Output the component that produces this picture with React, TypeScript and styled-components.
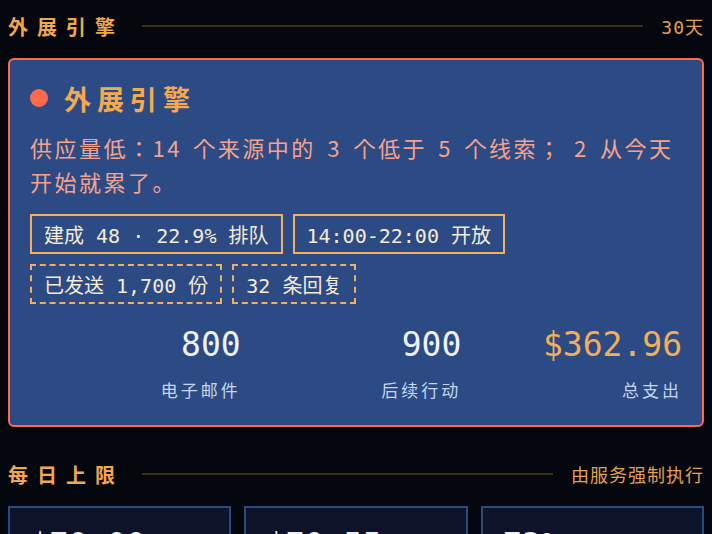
import React from "react";
import styled, { createGlobalStyle } from "styled-components";

const GlobalStyle = createGlobalStyle`
  html, body {
    margin: 0;
    padding: 0;
    background: #05070f;
  }
  body {
    font-family: "Noto Sans CJK JP", "Noto Sans", sans-serif;
    color: #eef2ff;
  }
`;

const CJK = `"Noto Sans CJK JP", "Noto Sans", sans-serif`;
const MONO = `"DejaVu Sans Mono", "Noto Sans CJK JP", monospace`;

const Page = styled.div`
  padding: 8px 8px 0;
  display: flex;
  flex-direction: column;
`;

const SectionHead = styled.div`
  height: 36px;
  display: flex;
  align-items: center;
  gap: 18px;
`;

const SectionTitle = styled.h2`
  margin: 0;
  font-family: ${CJK};
  font-size: 20px;
  font-weight: 700;
  letter-spacing: 9px;
  color: #f0a84c;
  white-space: nowrap;
`;

const Rule = styled.div`
  flex: 1;
  height: 2px;
  background: #3e3016;
`;

const SectionNote = styled.span<{ mono?: boolean }>`
  font-family: ${props => (props.mono ? MONO : CJK)};
  font-size: 18px;
  letter-spacing: 1px;
  color: #e3a04e;
  white-space: nowrap;
`;

const EngineCard = styled.section`
  margin-top: 14px;
  background: #2c4a84;
  border: 2px solid #ff6b4a;
  border-radius: 6px;
  padding: 20px 20px 23px;
  display: flex;
  flex-direction: column;
`;

const TitleRow = styled.div`
  display: flex;
  align-items: center;
  gap: 16px;
  height: 36px;
`;

const Dot = styled.span`
  width: 18px;
  height: 18px;
  border-radius: 50%;
  background: #ff6b4a;
`;

const CardTitle = styled.h1`
  margin: 0;
  font-family: ${CJK};
  font-size: 27px;
  font-weight: 700;
  letter-spacing: 6px;
  color: #f2aa52;
`;

const Notice = styled.p`
  margin: 14px 0 0;
  font-family: ${CJK};
  font-size: 22px;
  line-height: 34px;
  letter-spacing: 2.5px;
  word-spacing: 4px;
  text-spacing-trim: space-all;
  color: #f5a28c;
`;

const ChipRow = styled.div<{ top: number }>`
  display: flex;
  gap: 10px;
  margin-top: ${props => props.top}px;
`;

const Chip = styled.span<{ dashed?: boolean }>`
  height: 40px;
  box-sizing: border-box;
  padding: 0 12px;
  display: flex;
  align-items: center;
  border: 2px ${props => (props.dashed ? "dashed" : "solid")} #f0b060;
  font-family: ${MONO};
  font-size: 20px;
  color: #f6ebd6;
  white-space: pre;
`;

const Stats = styled.div`
  margin-top: 21px;
  display: grid;
  grid-template-columns: repeat(3, 1fr);
  gap: 10px;
`;

const Stat = styled.div`
  display: flex;
  flex-direction: column;
  align-items: flex-end;
`;

const StatValue = styled.div<{ accent?: boolean }>`
  font-family: ${MONO};
  font-size: 33px;
  line-height: 40px;
  color: ${props => (props.accent ? "#f2ae58" : "#eef2ff")};
`;

const StatLabel = styled.div`
  margin-top: 13px;
  font-family: ${CJK};
  font-size: 17px;
  line-height: 24px;
  letter-spacing: 3px;
  color: #c8d6f2;
`;

const LimitHead = styled(SectionHead)`
  margin-top: 29px;
`;

const LimitGrid = styled.div`
  margin-top: 14px;
  display: grid;
  grid-template-columns: repeat(3, 1fr);
  gap: 13px;
`;

const LimitCard = styled.div`
  background: #0d1328;
  border: 2px solid #2c4a80;
  padding: 16px 20px;
  height: 110px;
`;

const LimitValue = styled.div`
  font-family: ${MONO};
  font-size: 32px;
  line-height: 40px;
  color: #eef2ff;
`;

const chips = [
  { text: "建成 48 · 22.9% 排队" },
  { text: "14:00-22:00 开放" },
];

const sentChips = [
  { text: "已发送 1,700 份" },
  { text: "32 条回复" },
];

const stats = [
  { value: "800", label: "电子邮件" },
  { value: "900", label: "后续行动" },
  { value: "$362.96", label: "总支出", accent: true },
];

const limits = ["$70.00", "$70.55", "73%"];

export default function App() {
  return (
    <>
      <GlobalStyle />
      <Page>
        <SectionHead>
          <SectionTitle>外展引擎</SectionTitle>
          <Rule />
          <SectionNote mono>30天</SectionNote>
        </SectionHead>

        <EngineCard>
          <TitleRow>
            <Dot />
            <CardTitle>外展引擎</CardTitle>
          </TitleRow>
          <Notice>
            供应量低：14 个来源中的 3 个低于 5 个线索； 2 从今天开始就累了。
          </Notice>
          <ChipRow top={16}>
            {chips.map(c => (
              <Chip key={c.text}>{c.text}</Chip>
            ))}
          </ChipRow>
          <ChipRow top={10}>
            {sentChips.map(c => (
              <Chip key={c.text} dashed>
                {c.text}
              </Chip>
            ))}
          </ChipRow>
          <Stats>
            {stats.map(s => (
              <Stat key={s.label}>
                <StatValue accent={s.accent}>{s.value}</StatValue>
                <StatLabel>{s.label}</StatLabel>
              </Stat>
            ))}
          </Stats>
        </EngineCard>

        <LimitHead>
          <SectionTitle>每日上限</SectionTitle>
          <Rule />
          <SectionNote>由服务强制执行</SectionNote>
        </LimitHead>

        <LimitGrid>
          {limits.map(v => (
            <LimitCard key={v}>
              <LimitValue>{v}</LimitValue>
            </LimitCard>
          ))}
        </LimitGrid>
      </Page>
    </>
  );
}
